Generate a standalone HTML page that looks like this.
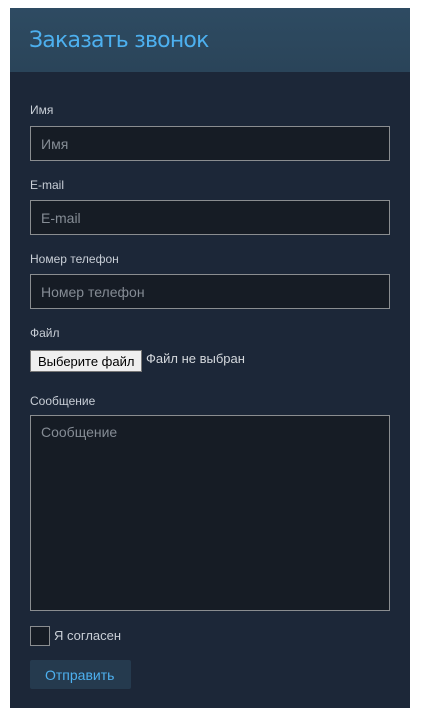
<!DOCTYPE html>
<html><head><meta charset="utf-8"><style>
*{box-sizing:border-box;margin:0;padding:0}
body{width:425px;height:719px;background:#fff;font-family:"Liberation Sans",sans-serif;position:relative;overflow:hidden}
.panel{position:absolute;left:10px;top:8px;width:400px;height:700px;background:#1c2738}
.head{height:64px;background:linear-gradient(#2e4b62,#2a4459);color:#4db0ef;font-size:22px;padding:20px 0 0 19px;font-family:"DejaVu Sans","Liberation Sans",sans-serif;letter-spacing:-0.8px}
.ab{position:absolute}
.lbl{color:#c8ced6;font-size:12px;left:20px}
.inp{left:20px;width:360px;height:35px;background:#161c25;border:1px solid #8a8d90;color:#858c95;font-size:14px;padding:9px 0 0 10px}
</style></head><body>
<div class="panel">
<div class="head">Заказать звонок</div>
<div class="ab lbl" style="top:95px">Имя</div>
<div class="ab inp" style="top:118px">Имя</div>
<div class="ab lbl" style="top:170px">E-mail</div>
<div class="ab inp" style="top:192px">E-mail</div>
<div class="ab lbl" style="top:244px">Номер телефон</div>
<div class="ab inp" style="top:266px">Номер телефон</div>
<div class="ab lbl" style="top:318px">Файл</div>
<div class="ab" style="left:20px;top:342px;width:112px;height:22px;background:#efefef;border:1px solid #767676;color:#000;font-size:13px;padding:3px 0 0 7px">Выберите файл</div>
<div class="ab" style="left:136px;top:343px;color:#d4d8dd;font-size:13px">Файл не выбран</div>
<div class="ab lbl" style="top:386px">Сообщение</div>
<div class="ab inp" style="top:407px;height:196px;padding-top:8px">Сообщение</div>
<div class="ab" style="left:20px;top:618px;width:20px;height:20px;background:#161c25;border:1px solid #8a8d90"></div>
<div class="ab" style="left:44px;top:620px;color:#c8ced6;font-size:13px">Я согласен</div>
<div class="ab" style="left:20px;top:652px;width:101px;height:29px;background:#253a4e;border-radius:2px;color:#4db0ef;font-size:14px;padding:7px 0 0 15px">Отправить</div>
</div>
</body></html>
